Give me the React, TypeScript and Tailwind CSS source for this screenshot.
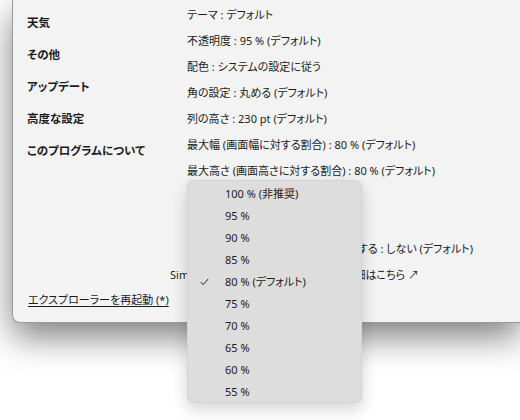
import React from 'react'

const font = "font-['Noto_Sans','Noto_Sans_CJK_JP',sans-serif] [font-feature-settings:'palt']"

const navItems = ['天気', 'その他', 'アップデート', '高度な設定', 'このプログラムについて']

const settings = [
  'テーマ : デフォルト',
  '不透明度 : 95 % (デフォルト)',
  '配色 : システムの設定に従う',
  '角の設定 : 丸める (デフォルト)',
  '列の高さ : 230 pt (デフォルト)',
  '最大幅 (画面幅に対する割合) : 80 % (デフォルト)',
  '最大高さ (画面高さに対する割合) : 80 % (デフォルト)',
  'フォント : 既定',
  '影 : あり',
]

const options = ['100 % (非推奨)', '95 %', '90 %', '85 %', '80 % (デフォルト)', '75 %', '70 %', '65 %', '60 %', '55 %']

const App: React.FC = () => {
  return (
    <div className={`relative w-[520px] h-[420px] overflow-hidden bg-white text-[11px] text-[#1b1b1b] ${font}`}>
      {/* Settings window */}
      <div className="pl-[12px]">
        <div className="h-[323px] bg-[#f3f3f3] border-l border-b border-[#9a9a9a] rounded-bl-[8px] shadow-[0_14px_34px_rgba(0,0,0,0.5)] flex">
          {/* Left navigation */}
          <div className="w-[174px] shrink-0 pl-[14px] pt-[14px] flex flex-col text-[11.5px]">
            {navItems.map((item) => (
              <div key={item} className="h-[32px] flex items-start font-bold leading-[18px]">
                {item}
              </div>
            ))}
          </div>

          {/* Right column */}
          <div className="flex-1 pt-[2px] flex flex-col">
            {settings.map((s) => (
              <div key={s} className="h-[26px] flex items-center whitespace-nowrap">
                {s}
              </div>
            ))}
            <div className="h-[26px] w-[286px] flex items-center justify-end whitespace-nowrap">
              ウィンドウの影を無効にする : しない (デフォルト)
            </div>
            <div className="h-[26px] -ml-[17px] w-[249px] flex items-center justify-between whitespace-nowrap">
              <span>Simple Window Switcher</span>
              <span>の詳細はこちら ↗</span>
            </div>
          </div>
        </div>
      </div>

      {/* Restart link, bottom-left of window */}
      <div className="absolute left-[28px] top-[290px] h-[20px] flex items-center underline underline-offset-2 whitespace-nowrap">
        エクスプローラーを再起動 (*)
      </div>

      {/* Dropdown menu */}
      <div className="absolute left-[187px] top-[180px] w-[175px] h-[223px] pt-[2px] rounded-[6px] bg-[#dddddd] shadow-[0_6px_16px_rgba(0,0,0,0.18)] border border-[#d4d4d4]">
        {options.map((o) => (
          <div key={o} className="relative h-[22px] flex items-center pl-[37px] whitespace-nowrap">
            {o === '80 % (デフォルト)' && (
              <svg className="absolute left-[12px] top-[7px]" width="9" height="8" viewBox="0 0 9 8">
                <path d="M0.8 4.2 L3.2 6.6 L8.2 1" fill="none" stroke="#1b1b1b" strokeWidth="1" />
              </svg>
            )}
            {o}
          </div>
        ))}
      </div>
    </div>
  )
}

export default App
